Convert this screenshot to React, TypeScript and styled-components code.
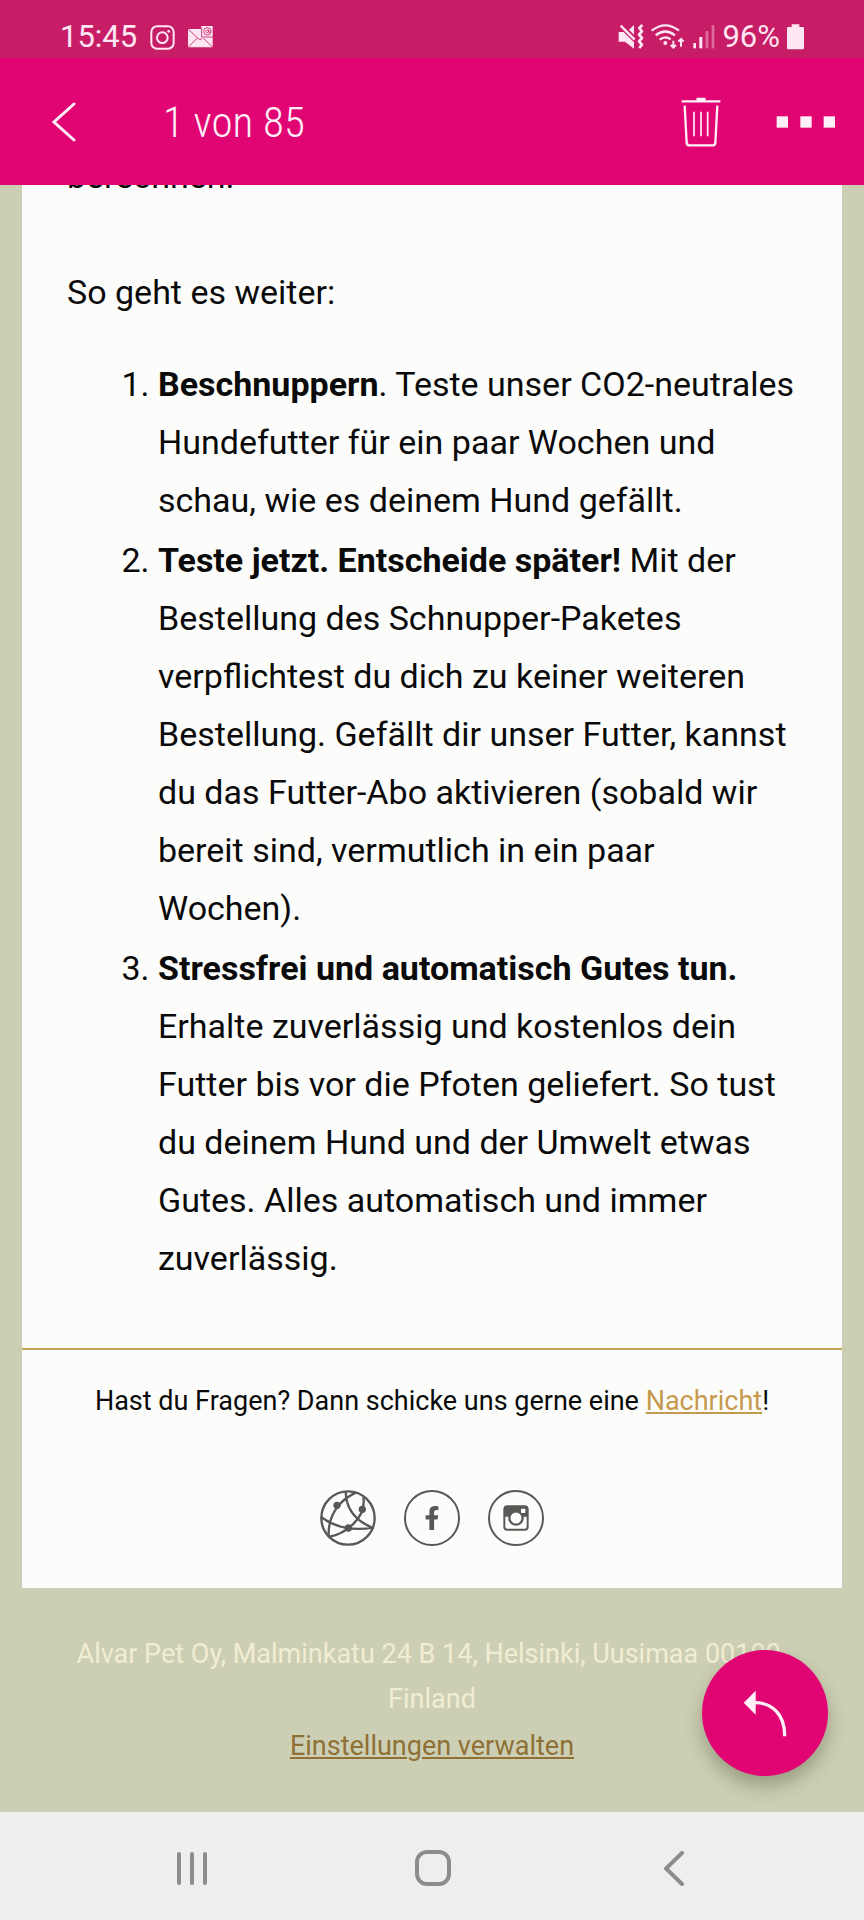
import React from "react";
import styled, { createGlobalStyle } from "styled-components";
import { FaFacebookF } from "react-icons/fa";

const GlobalStyle = createGlobalStyle`
  *, *::before, *::after { box-sizing: border-box; }
  body { margin: 0; background: #cdcfb4; font-family: Roboto, "Liberation Sans", sans-serif; }
`;

const Screen = styled.div`
  display: flex;
  flex-direction: column;
  min-height: 100vh;
`;

const StatusBar = styled.div`
  display: flex;
  justify-content: space-between;
  height: 58px;
  padding: 16px 60px 0;
  background: #c71d66;
  color: #ffe6f3;
`;

const StatusGroup = styled.div<{ $gap: number }>`
  display: flex;
  align-items: center;
  gap: ${(p) => p.$gap}px;
  height: 42px;
  font-size: 31px;
  line-height: 42px;
`;

const AppBar = styled.header`
  display: flex;
  align-items: center;
  height: 127px;
  padding: 0 28px 0 52px;
  background: #e10574;
  color: #fff0f8;
`;

const IconButton = styled.button`
  display: flex;
  align-items: center;
  justify-content: center;
  padding: 0;
  border: 0;
  background: none;
  color: inherit;
  cursor: pointer;
`;

const Title = styled.h1`
  flex: 1;
  margin: 0 0 0 87px;
  font-family: "Roboto Condensed", Roboto, sans-serif;
  font-size: 43px;
  font-weight: 300;
  line-height: 48px;
`;

const BarActions = styled.div`
  display: flex;
  align-items: center;
  gap: 55px;
`;

const Viewport = styled.main`
  position: relative;
  flex: 1;
  overflow: hidden;
`;

const Card = styled.article`
  margin: 0 22px;
  background: #fcfdfb;
  color: #0a0a0a;
`;

const CardBody = styled.div`
  display: flow-root;
  padding: 0 45px 59px;
  font-size: 34px;
  line-height: 58px;
`;

const Paragraph = styled.p<{ $scrolled?: boolean }>`
  margin: ${(p) => (p.$scrolled ? "-38px 0 58px" : "0 0 34px")};
`;

const Steps = styled.ol`
  margin: 0;
  padding-left: 91px;
`;

const Step = styled.li`
  margin-bottom: 2px;
`;

const Contact = styled.section`
  padding: 29px 0 42px;
  border-top: 2px solid #c2a25c;
  text-align: center;
  font-size: 27px;
  line-height: 45px;
`;

const ContactText = styled.p`
  margin: 0 0 66px;
`;

const TextLink = styled.a<{ $dark?: boolean }>`
  color: ${(p) => (p.$dark ? "#8f7136" : "#c69a4e")};
  text-decoration-thickness: 2px;
  text-underline-offset: 2px;
`;

const SocialLinks = styled.nav`
  display: flex;
  justify-content: center;
  gap: 28px;
`;

const SocialLink = styled.a<{ $ring?: boolean }>`
  display: flex;
  align-items: center;
  justify-content: center;
  width: 56px;
  height: 56px;
  border: ${(p) => (p.$ring ? "2px solid #585856" : "0")};
  border-radius: 50%;
  color: #585856;
`;

const Imprint = styled.footer`
  padding: 44px 67px 42px;
  color: #f1edd3;
  text-align: center;
  font-size: 27px;
  line-height: 45px;
`;

const ImprintLine = styled.p`
  margin: 0 0 2px;
`;

const ReplyButton = styled(IconButton)`
  position: absolute;
  right: 36px;
  bottom: 36px;
  width: 126px;
  height: 126px;
  border-radius: 50%;
  background: #e10574;
  color: #fff0f8;
  box-shadow: 0 10px 18px rgba(60, 70, 40, 0.36);
`;

const NavBar = styled.nav`
  display: grid;
  grid-template-columns: repeat(3, 1fr);
  height: 108px;
  padding: 4px 69px 0 71px;
  background: #eeeeec;
  color: #8c8c8a;
`;

const InstagramGlyph = () => (
  <svg width="25" height="25" viewBox="0 0 75 75" fill="none" stroke="currentColor" aria-hidden="true">
    <rect x="4" y="4" width="67" height="67" rx="17" strokeWidth="6" />
    <circle cx="37" cy="38" r="16" strokeWidth="6" />
    <circle cx="56" cy="19" r="4" fill="currentColor" stroke="none" />
  </svg>
);

const MailGlyph = () => (
  <svg width="25" height="22" viewBox="0 0 75 66" aria-hidden="true">
    <path d="M0 9H40V0H74V64H0Z" fill="currentColor" />
    <g fill="none" stroke="#c71d66" strokeWidth="2.5">
      <path d="M1 10L36 42L42 37M1 63L28 36M73 63L46 36M41 7V33H74" />
      <circle cx="58" cy="16" r="11" />
      <circle cx="58" cy="16" r="4" />
      <path d="M62 11V18Q65 21 68 17" />
    </g>
  </svg>
);

const MuteGlyph = () => (
  <svg width="26" height="26" viewBox="0 0 78 78" aria-hidden="true">
    <path d="M2 24H17L48 55V74L21 53H2Z" fill="currentColor" />
    <path d="M33 17L48 3V32Z" fill="currentColor" />
    <path d="M8 5L50 47" stroke="currentColor" strokeWidth="7" />
    <path
      d="M73 3L64 12L72 22L63 32L72 42L63 52L72 62L64 72"
      fill="none"
      stroke="currentColor"
      strokeWidth="8"
      strokeLinejoin="round"
    />
  </svg>
);

const WifiGlyph = () => (
  <svg width="35" height="26" viewBox="0 0 105 78" fill="none" stroke="currentColor" strokeWidth="7" aria-hidden="true">
    <path d="M2 20Q43 -12 84 20M14 34Q43 11 72 34M26 47Q43 34 59 46" />
    <circle cx="43" cy="57" r="6" fill="currentColor" stroke="none" />
    <path d="M67 50V71M59 63L67 71L75 63M90 68V45M82 53L90 45L98 53" strokeWidth="6" />
  </svg>
);

const SignalGlyph = () => (
  <svg width="22" height="24" viewBox="0 0 66 72" fill="currentColor" aria-hidden="true">
    <rect x="1" y="54" width="8" height="16" />
    <rect x="19" y="36" width="9" height="34" />
    <rect x="38" y="18" width="8" height="52" opacity="0.4" />
    <rect x="56" y="1" width="8" height="69" opacity="0.4" />
  </svg>
);

const BatteryGlyph = () => (
  <svg width="17" height="26" viewBox="0 0 51 78" fill="currentColor" aria-hidden="true">
    <path d="M14 1H37V9H47Q51 9 51 13V72Q51 76 47 76H4Q0 76 0 72V13Q0 9 4 9H14Z" />
  </svg>
);

const Chevron = ({ width, height, stroke }: { width: number; height: number; stroke: number }) => (
  <svg width={width} height={height} viewBox={`0 0 ${width} ${height}`} fill="none" aria-hidden="true">
    <path
      d={`M${width - 2} 2L2 ${height / 2}L${width - 2} ${height - 2}`}
      stroke="currentColor"
      strokeWidth={stroke}
      strokeLinecap="round"
    />
  </svg>
);

const TrashGlyph = () => (
  <svg width="40" height="50" viewBox="0 0 120 150" fill="none" stroke="currentColor" aria-hidden="true">
    <rect x="46" y="2" width="28" height="10" rx="4" fill="currentColor" stroke="none" />
    <path d="M2 13H118" strokeWidth="7" />
    <path d="M11 26L17 138Q18 145 25 145H95Q102 145 103 138L109 26" strokeWidth="7" />
    <path d="M39 44V118M60 44V118M80 44V118" strokeWidth="5" />
  </svg>
);

const MoreGlyph = () => (
  <svg width="60" height="12" viewBox="0 0 180 36" fill="currentColor" aria-hidden="true">
    <rect x="2" y="1" width="34" height="34" />
    <rect x="73" y="1" width="34" height="34" />
    <rect x="143" y="1" width="34" height="34" />
  </svg>
);

const GlobeGlyph = () => (
  <svg width="56" height="56" viewBox="0 0 168 168" fill="none" stroke="currentColor" strokeWidth="7" aria-hidden="true">
    <circle cx="84" cy="84" r="80" />
    <path d="M108 8C76 22 22 60 26 141M3 81C40 108 90 126 162 112M26 141C75 132 140 85 130 22M77 4C78 60 110 95 160 114" />
    <g fill="currentColor" stroke="none">
      <circle cx="51" cy="46" r="11" />
      <circle cx="127" cy="58" r="11" />
      <circle cx="85" cy="114" r="11" />
    </g>
  </svg>
);

const CameraGlyph = () => (
  <svg width="26" height="26" viewBox="0 0 78 78" aria-hidden="true">
    <rect x="4" y="4" width="70" height="70" rx="9" fill="none" stroke="currentColor" strokeWidth="6" />
    <path d="M3 35V12Q3 3 12 3H66Q75 3 75 12V35Z" fill="currentColor" />
    <circle cx="39" cy="39" r="20" fill="#fcfdfb" stroke="currentColor" strokeWidth="7" />
    <rect x="54" y="11" width="13" height="13" rx="2" fill="#fcfdfb" />
  </svg>
);

const ReplyGlyph = () => (
  <svg width="44" height="47" viewBox="0 0 132 141" aria-hidden="true">
    <path d="M2 38L38 2V74Z" fill="currentColor" />
    <path d="M36 38C88 38 126 74 125 139" fill="none" stroke="currentColor" strokeWidth="10" />
  </svg>
);

const RecentsGlyph = () => (
  <svg width="32" height="35" viewBox="0 0 32 35" stroke="currentColor" strokeWidth="4" strokeLinecap="round" aria-hidden="true">
    <path d="M3 3V32M16 3V32M29 3V32" />
  </svg>
);

const HomeGlyph = () => (
  <svg width="36" height="36" viewBox="0 0 36 36" fill="none" stroke="currentColor" strokeWidth="4" aria-hidden="true">
    <rect x="2" y="2" width="32" height="32" rx="10" />
  </svg>
);

export default function App() {
  return (
    <Screen>
      <GlobalStyle />
      <StatusBar>
        <StatusGroup $gap={13}>
          <span>15:45</span>
          <InstagramGlyph />
          <MailGlyph />
        </StatusGroup>
        <StatusGroup $gap={7}>
          <MuteGlyph />
          <WifiGlyph />
          <SignalGlyph />
          <span>96%</span>
          <BatteryGlyph />
        </StatusGroup>
      </StatusBar>
      <AppBar>
        <IconButton type="button" aria-label="Zurück">
          <Chevron width={24} height={40} stroke={3} />
        </IconButton>
        <Title>1 von 85</Title>
        <BarActions>
          <IconButton type="button" aria-label="Löschen">
            <TrashGlyph />
          </IconButton>
          <IconButton type="button" aria-label="Mehr">
            <MoreGlyph />
          </IconButton>
        </BarActions>
      </AppBar>
      <Viewport>
        <Card>
          <CardBody>
            <Paragraph $scrolled>berechnen.</Paragraph>
            <Paragraph>So geht es weiter:</Paragraph>
            <Steps>
              <Step>
                <strong>Beschnuppern</strong>. Teste unser CO2-neutrales Hundefutter für ein paar Wochen und
                schau, wie es deinem Hund gefällt.
              </Step>
              <Step>
                <strong>Teste jetzt. Entscheide später!</strong> Mit der Bestellung des Schnupper-Paketes
                verpflichtest du dich zu keiner weiteren Bestellung. Gefällt dir unser Futter, kannst du das
                Futter-Abo aktivieren (sobald wir bereit sind, vermutlich in ein paar Wochen).
              </Step>
              <Step>
                <strong>Stressfrei und automatisch Gutes tun.</strong> Erhalte zuverlässig und kostenlos dein
                Futter bis vor die Pfoten geliefert. So tust du deinem Hund und der Umwelt etwas Gutes. Alles
                automatisch und immer zuverlässig.
              </Step>
            </Steps>
          </CardBody>
          <Contact>
            <ContactText>
              Hast du Fragen? Dann schicke uns gerne eine <TextLink href="#nachricht">Nachricht</TextLink>!
            </ContactText>
            <SocialLinks aria-label="Soziale Medien">
              <SocialLink href="#website" aria-label="Website">
                <GlobeGlyph />
              </SocialLink>
              <SocialLink href="#facebook" aria-label="Facebook" $ring>
                <FaFacebookF size={24} />
              </SocialLink>
              <SocialLink href="#instagram" aria-label="Instagram" $ring>
                <CameraGlyph />
              </SocialLink>
            </SocialLinks>
          </Contact>
        </Card>
        <Imprint>
          <ImprintLine>Alvar Pet Oy, Malminkatu 24 B 14, Helsinki, Uusimaa 00100&nbsp; Finland</ImprintLine>
          <TextLink href="#einstellungen" $dark>
            Einstellungen verwalten
          </TextLink>
        </Imprint>
        <ReplyButton type="button" aria-label="Antworten">
          <ReplyGlyph />
        </ReplyButton>
      </Viewport>
      <NavBar aria-label="Systemnavigation">
        <IconButton type="button" aria-label="Letzte Apps">
          <RecentsGlyph />
        </IconButton>
        <IconButton type="button" aria-label="Startbildschirm">
          <HomeGlyph />
        </IconButton>
        <IconButton type="button" aria-label="Zurück">
          <Chevron width={20} height={35} stroke={4} />
        </IconButton>
      </NavBar>
    </Screen>
  );
}
